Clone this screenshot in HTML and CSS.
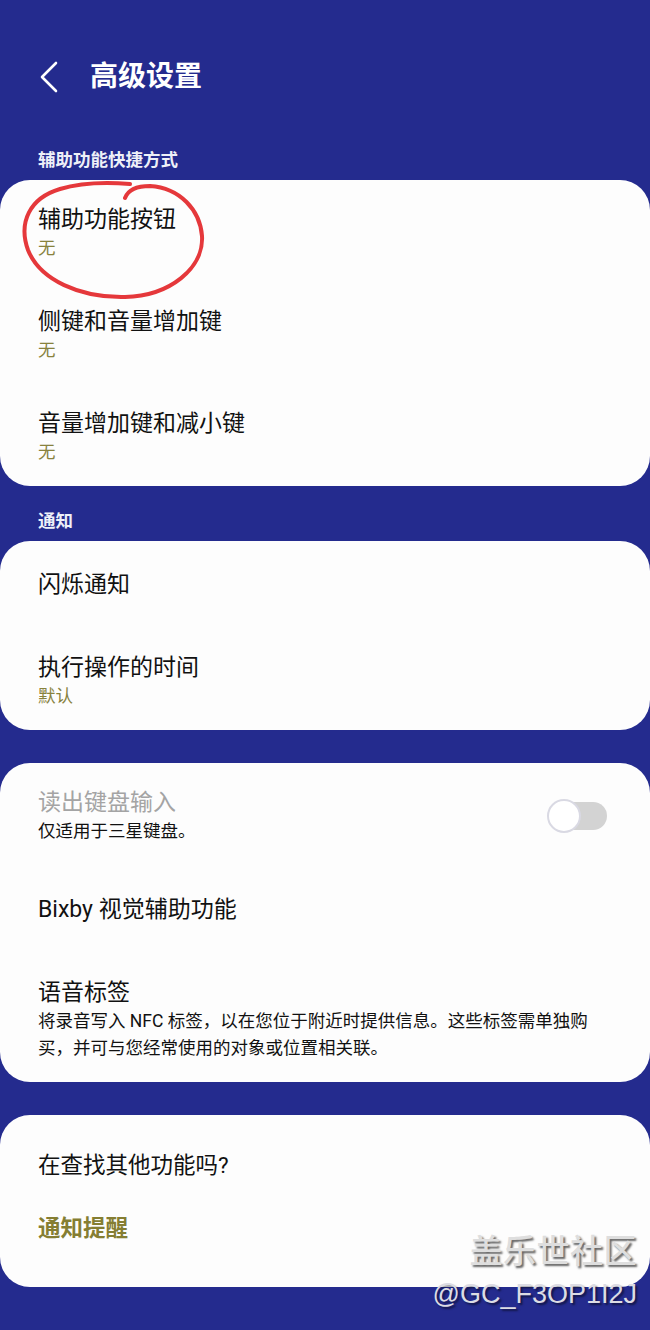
FILE: index.html
```html
<!DOCTYPE html>
<html lang="zh-CN">
<head>
  <meta charset="UTF-8">
  <meta name="viewport" content="width=device-width, initial-scale=1.0">
  <title>高级设置</title>
  <link rel="stylesheet" href="styles.css">
</head>
<body>

  <div class="page">
    <header class="app-bar">
      <svg class="back" width="20" height="32" viewBox="0 0 20 32">
        <polyline points="17,2 3,16 17,30" fill="none" stroke="#fff" stroke-width="2.6" stroke-linecap="round" stroke-linejoin="round"/>
      </svg>
      <h1>高级设置</h1>
    </header>

    <!-- Accessibility shortcuts -->
    <div class="section-label">辅助功能快捷方式</div>
    <section class="card card-marked">
      <div class="item">
        <div class="item-title">辅助功能按钮</div>
        <div class="item-sub">无</div>
      </div>
      <div class="item">
        <div class="item-title">侧键和音量增加键</div>
        <div class="item-sub">无</div>
      </div>
      <div class="item">
        <div class="item-title">音量增加键和减小键</div>
        <div class="item-sub">无</div>
      </div>

      <!-- hand-drawn red mark -->
      <svg class="mark" width="194" height="124" viewBox="0 0 194 124">
        <path d="M109,20 C112,12 120,8 134,8 C164,10 184,32 186,58 C188,90 154,118 109,119 C64,120 24,102 12,72 C2,44 14,20 44,11 C64,5 89,4 114,6"
              fill="none" stroke="#e5383b" stroke-width="4" stroke-linecap="round"/>
      </svg>
    </section>

    <!-- Notifications -->
    <div class="section-label">通知</div>
    <section class="card">
      <div class="item item-single">
        <div class="item-title">闪烁通知</div>
      </div>
      <div class="item">
        <div class="item-title">执行操作的时间</div>
        <div class="item-sub">默认</div>
      </div>
    </section>

    <section class="card card-spaced">
      <div class="item item-switch">
        <div class="item-text">
          <div class="item-title disabled">读出键盘输入</div>
          <div class="item-desc">仅适用于三星键盘。</div>
        </div>
        <div class="switch"><span class="knob"></span></div>
      </div>
      <div class="item item-single item-bixby">
        <div class="item-title">Bixby 视觉辅助功能</div>
      </div>
      <div class="item item-voice">
        <div class="item-title">语音标签</div>
        <div class="item-desc long">将录音写入 NFC 标签，以在您位于附近时提供信息。这些标签需单独购买，并可与您经常使用的对象或位置相关联。</div>
      </div>
    </section>

    <section class="card card-spaced more">
      <div class="more-title">在查找其他功能吗?</div>
      <a class="more-link">通知提醒</a>
    </section>

    <div class="watermark">
      <div class="wm-name">盖乐世社区</div>
      <div class="wm-user">@GC_F3OP1I2J</div>
    </div>
  </div>

</body>
</html>
```

FILE: styles.css
```css
body {
  margin: 0;
  padding: 0;
  background: #242b8e;
  font-family: Roboto, "Noto Sans CJK SC", sans-serif;
  color: #111;
}

.page {
  position: relative;
  width: 650px;
  min-height: 1330px;
  padding-bottom: 43px;
  box-sizing: border-box;
}

/* Top bar */
.app-bar {
  display: flex;
  align-items: center;
  gap: 31px;
  padding: 57px 0 0 39px;
  height: 40px;
}

.app-bar h1 {
  margin: 0;
  font-size: 28px;
  line-height: 40px;
  font-weight: 700;
  color: #fff;
}

.back {
  display: block;
}

.section-label {
  margin: 51px 0 8px 38px;
  font-size: 17.5px;
  line-height: 24px;
  font-weight: 700;
  color: #eef0f8;
}

.card + .section-label {
  margin-top: 23px;
}

/* Cards */
.card {
  position: relative;
  background: #fdfdfd;
  border-radius: 30px;
}

.card-spaced {
  margin-top: 33px;
}

.item {
  padding: 25px 38px 21px;
}

.item-single {
  padding: 29px 38px 28px;
}

.item-bixby {
  padding: 30px 38px 28px;
}

.item-voice {
  padding-bottom: 20px;
}

.item-title {
  font-size: 23px;
  line-height: 30px;
}

.item-title.disabled {
  color: #a4a4a4;
}

.item-sub {
  font-size: 17.5px;
  line-height: 26px;
  color: #88823d;
}

.item-desc {
  font-size: 17.5px;
  line-height: 26px;
  color: #111;
}

.item-desc.long {
  line-height: 27px;
  padding-right: 12px;
}

/* Switch row */
.item-switch {
  display: flex;
  align-items: center;
  justify-content: space-between;
  padding-right: 43px;
}

.switch {
  position: relative;
  width: 59px;
  height: 28px;
  border-radius: 14px;
  background: #d3d3d3;
}

.knob {
  position: absolute;
  left: -1px;
  top: -3px;
  width: 30px;
  height: 30px;
  border-radius: 50%;
  background: #fff;
  border: 2px solid #d9d9e3;
}

/* Red hand-drawn circle */
.mark {
  position: absolute;
  left: 16px;
  top: -2px;
  pointer-events: none;
}

/* Bottom card */
.more {
  padding: 35px 38px 44px;
}

.more-title {
  font-size: 22.5px;
  line-height: 30px;
}

.more-link {
  display: block;
  margin-top: 33px;
  font-size: 22.5px;
  line-height: 30px;
  font-weight: 700;
  color: #857e32;
}

/* Watermark */
.watermark {
  position: absolute;
  right: 13px;
  bottom: 19px;
  text-align: right;
}

.wm-name {
  font-size: 33px;
  line-height: 40px;
  font-weight: 500;
  color: #dedede;
  text-shadow: 2px 2px 2px rgba(0, 0, 0, 0.6);
  letter-spacing: 0.5px;
}

.wm-user {
  margin-top: 5px;
  font-family: "Liberation Sans", sans-serif;
  font-size: 27px;
  line-height: 34px;
  color: #dcdce4;
  text-shadow: 2px 2px 2px rgba(0, 0, 0, 0.5);
}
```
